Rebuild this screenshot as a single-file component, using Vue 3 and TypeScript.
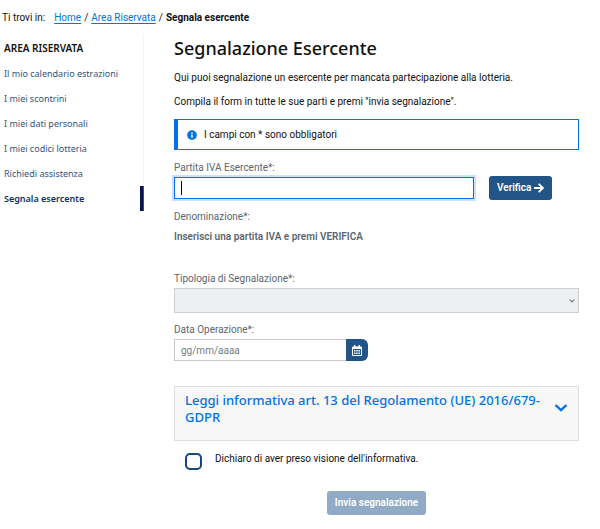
<script setup lang="ts">
import { onMounted, ref } from 'vue'

interface MenuItem {
  label: string
  active?: boolean
}

const menu: MenuItem[] = [
  { label: 'Il mio calendario estrazioni' },
  { label: 'I miei scontrini' },
  { label: 'I miei dati personali' },
  { label: 'I miei codici lotteria' },
  { label: 'Richiedi assistenza' },
  { label: 'Segnala esercente', active: true },
]

const partitaIva = ref('')
const dataOperazione = ref('')
const presaVisione = ref(false)
const ivaInput = ref<HTMLInputElement | null>(null)

onMounted(() => ivaInput.value?.focus())
</script>

<template>
  <div class="page">
    <nav class="breadcrumb" aria-label="Percorso di navigazione">
      <span class="breadcrumb-intro">Ti trovi in:</span>
      <a href="#">Home</a><span class="sep">/</span><a href="#">Area Riservata</a><span class="sep">/</span><strong>Segnala esercente</strong>
    </nav>

    <div class="columns">
      <aside class="sidebar">
        <h2>AREA RISERVATA</h2>
        <ul>
          <li v-for="item in menu" :key="item.label">
            <a href="#" :class="{ active: item.active }">{{ item.label }}</a>
          </li>
        </ul>
      </aside>

      <main>
        <h1>Segnalazione Esercente</h1>
        <p>Qui puoi segnalazione un esercente per mancata partecipazione alla lotteria.</p>
        <p>Compila il form in tutte le sue parti e premi "invia segnalazione".</p>

        <div class="notice">
          <svg viewBox="0 0 512 512" width="10" height="10" aria-hidden="true">
            <path fill="#0073e6" d="M256 8C119 8 8 119 8 256s111 248 248 248 248-111 248-248S393 8 256 8zm0 110c23.200 0 42 18.800 42 42s-18.800 42-42 42-42-18.800-42-42 18.800-42 42-42zm56 254c0 6.600-5.400 12-12 12h-88c-6.600 0-12-5.400-12-12v-24c0-6.600 5.400-12 12-12h12v-64h-12c-6.600 0-12-5.400-12-12v-24c0-6.600 5.400-12 12-12h64c6.600 0 12 5.400 12 12v100h12c6.600 0 12 5.400 12 12v24z" />
          </svg>
          <span>I campi con * sono obbligatori</span>
        </div>

        <form @submit.prevent>
          <label for="piva">Partita IVA Esercente*:</label>
          <div class="row">
            <div class="iva">
              <input id="piva" ref="ivaInput" v-model="partitaIva" class="text-field" type="text" />
              <span v-if="!partitaIva" class="caret" aria-hidden="true"></span>
            </div>
            <button type="button" class="btn">
              Verifica
              <svg viewBox="0 0 10 10" width="10" height="10" aria-hidden="true">
                <path d="M0 5H9M4.700 0.800L9 5L4.700 9.200" fill="none" stroke="#fff" stroke-width="1.800" />
              </svg>
            </button>
          </div>

          <div class="caption">Denominazione*:</div>
          <div class="name">Inserisci una partita IVA e premi VERIFICA</div>

          <label for="tipologia">Tipologia di Segnalazione*:</label>
          <div class="select-wrap">
            <select id="tipologia" disabled></select>
            <svg viewBox="0 0 6 4" width="6" height="4" aria-hidden="true">
              <path d="M0.500 0.500L3 3L5.500 0.500" fill="none" stroke="#7d8185" stroke-width="1.200" />
            </svg>
          </div>

          <label for="data">Data Operazione*:</label>
          <div class="date">
            <input id="data" v-model="dataOperazione" class="text-field" type="text" placeholder="gg/mm/aaaa" />
            <button type="button" aria-label="Apri calendario">
              <svg viewBox="0 0 10 11" width="10" height="11" aria-hidden="true">
                <path fill="#fff" fill-rule="evenodd" d="M2 0h1.500v1.500h3V0H8v1.500h1a1 1 0 0 1 1 1V10a1 1 0 0 1-1 1H1a1 1 0 0 1-1-1V2.500a1 1 0 0 1 1-1h1zM1 4v6h8V4z" />
                <path fill="#fff" d="M2 5h1.500v1.500H2zM4.250 5h1.500v1.500h-1.500zM6.500 5H8v1.500H6.500zM2 7.500h1.500V9H2zM4.250 7.500h1.500V9h-1.500zM6.500 7.500H8V9H6.500z" />
              </svg>
            </button>
          </div>

          <button type="button" class="accordion" aria-expanded="false">
            <span>Leggi informativa art. 13 del Regolamento (UE) 2016/679-<wbr />GDPR</span>
            <svg viewBox="0 0 14 8" width="14" height="8" aria-hidden="true">
              <path d="M1.500 1L7 6.200L12.500 1" fill="none" stroke="#0073e6" stroke-width="2.400" />
            </svg>
          </button>

          <div class="consent">
            <input id="visione" v-model="presaVisione" type="checkbox" />
            <label for="visione">Dichiaro di aver preso visione dell'informativa.</label>
          </div>

          <div class="actions">
            <button type="submit" class="btn" disabled>Invia segnalazione</button>
          </div>
        </form>
      </main>
    </div>
  </div>
</template>

<style>
body {
  background: #fff;
}
</style>

<style scoped>
* {
  box-sizing: border-box;
}

.page {
  padding: 10px 21px 14px 2px;
  font: 10px/16px Roboto, "Liberation Sans", sans-serif;
  color: #111;
}

input,
select,
button {
  font: inherit;
}

.breadcrumb {
  display: flex;
}

.breadcrumb a {
  color: #0073e6;
  text-underline-offset: 2px;
}

.breadcrumb-intro {
  margin-right: 9px;
}

.sep {
  margin: 0 3px;
}

.breadcrumb strong {
  font-weight: 700;
}

.columns {
  display: grid;
  grid-template-columns: 142px minmax(0, 1fr);
  gap: 30px;
  align-items: start;
  padding-top: 8px;
}

.sidebar {
  font-family: "Noto Sans", sans-serif;
  border-right: 1px solid #f4f4f5;
  padding: 4px 0 0 2px;
}

.sidebar h2 {
  margin: 0 0 3px;
  font-size: 10px;
  line-height: 20px;
  font-weight: 600;
}

.sidebar ul {
  margin: 0;
  padding: 0;
  list-style: none;
}

.sidebar a {
  display: block;
  font-size: 9px;
  line-height: 25px;
  color: #30557f;
  text-decoration: none;
}

.sidebar a.active {
  margin-right: -1px;
  color: #0c3160;
  font-weight: 600;
  border-right: 1px solid #225587;
  box-shadow: inset -3px 0 #0a1550;
}

h1 {
  margin: 0 0 8px;
  font: 500 18px/28px "Noto Sans", sans-serif;
}

p {
  margin: 0 0 8px;
}

.notice {
  display: flex;
  align-items: center;
  gap: 7px;
  height: 31px;
  margin: 9px 0 10px;
  padding-left: 9px;
  border: 1px solid #0073e6;
  border-left-width: 4px;
}

label,
.caption {
  display: block;
  color: #5a6772;
}

.row {
  display: flex;
  align-items: center;
  gap: 15px;
}

.text-field {
  width: 100%;
  min-width: 0;
  height: 22px;
  padding: 0 6px;
  border: 1px solid #c5c9cd;
  border-radius: 0;
  background: #fff;
  color: #17212b;
  outline: none;
}

.iva {
  display: flex;
  position: relative;
  flex: 0 1 300px;
}

.iva .text-field:focus {
  border-color: #0073e6;
  box-shadow: 0 0 0 2px #cbe2fa;
}

.iva .text-field:placeholder-shown {
  caret-color: transparent;
}

.caret {
  display: none;
  position: absolute;
  left: 7px;
  top: 4px;
  width: 1px;
  height: 14px;
  background: #000;
}

.text-field:focus + .caret {
  display: block;
}

.btn {
  display: inline-flex;
  align-items: center;
  justify-content: center;
  gap: 3px;
  height: 24px;
  padding: 0 8px;
  border: 0;
  border-radius: 3px;
  background: #225587;
  color: #fff;
  font-weight: 600;
}

.btn:disabled {
  background: #91abc6;
}

.caption {
  margin-top: 9px;
}

.name {
  margin: 4px 0 26px;
  color: #5a6772;
  font-weight: 600;
}

.select-wrap {
  display: grid;
  align-items: center;
  margin: 1px 0 9px;
}

.select-wrap > * {
  grid-area: 1 / 1;
}

.select-wrap svg {
  justify-self: end;
  margin-right: 4px;
}

select {
  appearance: none;
  width: 100%;
  height: 25px;
  border: 1px solid #cdd0d3;
  border-radius: 0;
  background: #eeeff1;
  opacity: 1;
}

.date {
  display: flex;
  width: 194px;
  margin: 1px 0 25px;
}

.date input {
  flex: 1;
  border-right: 0;
}

.date input::placeholder {
  color: #727d87;
  opacity: 1;
}

.date button {
  display: grid;
  place-items: center;
  width: 22px;
  padding: 0;
  border: 0;
  border-radius: 0 6px 6px 0;
  background: #225587;
}

.accordion {
  display: flex;
  justify-content: space-between;
  gap: 8px;
  width: 100%;
  min-height: 55px;
  padding: 5px 10px;
  border: 1px solid #dedede;
  background: #f7f7f7;
  color: #0073e6;
  font: 500 13px/17px "Noto Sans", sans-serif;
  text-align: left;
}

.accordion svg {
  flex: none;
  margin-top: 12px;
}

.consent {
  display: flex;
  align-items: flex-start;
  gap: 13px;
  padding: 10px 11px 0;
}

.consent label {
  color: #111;
}

.consent input {
  appearance: none;
  width: 17px;
  height: 17px;
  margin: 2px 0 0;
  border: 2px solid #174780;
  border-radius: 5px;
  background: #fff;
}

.consent input:checked {
  background: #174780;
}

.actions {
  display: flex;
  justify-content: center;
  padding-top: 21px;
}
</style>
